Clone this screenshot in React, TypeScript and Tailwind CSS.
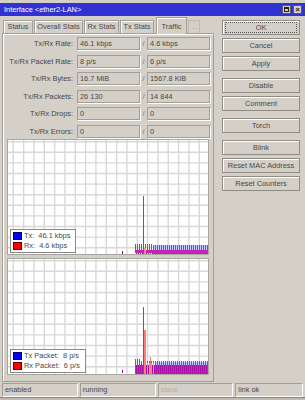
import React from "react";

const rows = [
	{ label: "Tx/Rx Rate:", a: "46.1 kbps", b: "4.6 kbps" },
	{ label: "Tx/Rx Packet Rate:", a: "8 p/s", b: "6 p/s" },
	{ label: "Tx/Rx Bytes:", a: "16.7 MiB", b: "1567.8 KiB" },
	{ label: "Tx/Rx Packets:", a: "26 130", b: "14 844" },
	{ label: "Tx/Rx Drops:", a: "0", b: "0" },
	{ label: "Tx/Rx Errors:", a: "0", b: "0" },
];

const tabs = [
	{ name: "Status", w: "w-[30px]" },
	{ name: "Overall Stats", w: "w-[49px]" },
	{ name: "Rx Stats", w: "w-[35px]" },
	{ name: "Tx Stats", w: "w-[34px]" },
];

const buttonGroups = [
	["OK", "Cancel", "Apply"],
	["Disable", "Comment"],
	["Torch"],
	["Blink", "Reset MAC Address", "Reset Counters"],
];

function range(from: number, to: number, step: number) {
	const out: number[] = [];
	for (let v = from; v <= to; v += step) out.push(v);
	return out;
}

function Grid({ h }: { h: number }) {
	return (
		<g stroke="#d8d8d8" strokeWidth="1.4">
			{range(0, 18, 1).map((k) => (
				<line key={"v" + k} x1={5.3 + k * 10.33} y1={0} x2={5.3 + k * 10.33} y2={h} />
			))}
			{range(0, 11, 1).map((k) => (
				<line key={"h" + k} x1={0} y1={1.7 + k * 10.6} x2={200} y2={1.7 + k * 10.6} />
			))}
		</g>
	);
}

function Legend({ tx, rx }: { tx: string; rx: string }) {
	return (
		<div className="absolute bottom-[1px] left-[2px] flex flex-col gap-[2px] border border-[#8a8a8a] bg-white py-[2px] pl-[2px] pr-[5px]">
			<div className="flex items-center gap-[2px]">
				<span className="h-[8px] w-[9px] border border-[#000060] bg-[#0000ff]" />
				<span className="whitespace-pre leading-[8px]">{tx}</span>
			</div>
			<div className="flex items-center gap-[2px]">
				<span className="h-[8px] w-[9px] border border-[#600000] bg-[#ff0000]" />
				<span className="whitespace-pre leading-[8px]">{rx}</span>
			</div>
		</div>
	);
}

function TrafficGraph() {
	const h = 114;
	return (
		<div className="relative ml-[4px] mt-[1px] h-[116px] w-[202px] border border-[#a9a69f] bg-white">
			<svg width="200" height={h} className="block">
				<Grid h={h} />
				<rect x="145" y="105" width="55" height="9" fill="#cacaff" />
				{range(127, 199, 2).map((x) => (
					<rect key={x} x={x} y={x > 144 ? 105 : 104} width="1" height={9} fill="#5555ff" />
				))}
				{range(128, 200, 2).map((x) => (
					<rect key={"m" + x} x={x} y={110} width="1" height={4} fill="#c020b0" />
				))}
				<rect x="135" y="56" width="1" height="58" fill="#5050ff" />
				<rect x="136" y="108" width="2" height="6" fill="#ff8a8a" />
				<rect x="114" y="111" width="1" height="3" fill="#a000a0" />
			</svg>
			<Legend tx="Tx:  46.1 kbps" rx="Rx:  4.6 kbps" />
		</div>
	);
}

function PacketGraph() {
	const h = 115;
	return (
		<div className="relative ml-[4px] mt-[3px] h-[117px] w-[202px] border border-[#a9a69f] bg-white">
			<svg width="200" height={h} className="block">
				<Grid h={h} />
				<rect x="147" y="103" width="53" height="5" fill="#cacaff" />
				{range(127, 199, 2).map((x) => (
					<rect key={x} x={x} y={x < 133 ? 100 : 102} width="1" height={h} fill="#5555ff" />
				))}
				{range(128, 200, 2).map((x) => (
					<rect key={"m" + x} x={x} y={106} width="1" height={h} fill="#a810a8" />
				))}
				{range(137, 145, 2).map((x) => (
					<rect key={"s" + x} x={x} y={104} width="1" height={h} fill="#ff8a8a" />
				))}
				<rect x="135" y="48" width="1" height={h} fill="#5050ff" />
				<rect x="136" y="71" width="2" height={h} fill="#ff7a7a" />
				<rect x="142" y="98" width="1" height={h} fill="#ff7a7a" />
				<rect x="114" y="111" width="1" height="3" fill="#a000a0" />
			</svg>
			<Legend tx="Tx Packet:  8 p/s" rx="Rx Packet:  6 p/s" />
		</div>
	);
}

export default function App() {
	return (
		<div className="flex h-[400px] w-[305px] flex-col overflow-hidden bg-[#d4d0c8] font-['Liberation_Sans',Arial,sans-serif] text-[7.4px] text-[#474747]">
			<div className="h-[3px]" />
			<div className="flex h-[13px] items-center justify-between bg-[#3232d2] pl-[4px] pr-[3px] text-white">
				<span>Interface &lt;ether2-LAN&gt;</span>
				<div className="flex gap-[2px]">
					<div className="flex h-[9px] w-[9px] items-center justify-center border border-[#5a5a5a] bg-[#d4d0c8]">
						<div className="h-[5px] w-[5px] border border-t-2 border-[#202020]" />
					</div>
					<div className="flex h-[9px] w-[9px] items-center justify-center border border-[#5a5a5a] bg-[#d4d0c8] text-[8px] font-bold leading-none text-[#202020]">
						×
					</div>
				</div>
			</div>

			<div className="mt-[1px] flex">
				<div className="ml-[2px] flex w-[212px] flex-col">
					<div className="flex h-[16px] items-end gap-[1px] pl-[1px]">
						{tabs.map((t) => (
							<div
								key={t.name}
								className={`${t.w} flex h-[13px] items-center justify-center border border-b-0 border-[#a19e97] shadow-[inset_1px_1px_0_#fff]`}
							>
								{t.name}
							</div>
						))}
						<div className="relative z-10 -mb-[1px] ml-[1px] flex h-[17px] w-[31px] items-start justify-center border border-b-0 border-[#a19e97] bg-[#d4d0c8] pt-[3px] shadow-[inset_1px_1px_0_#fff]">
							Traffic
						</div>
						<div className="flex h-[13px] w-[12px] items-center justify-center border border-b-0 border-[#bdb9b1] text-[#a8a59e]">
							...
						</div>
					</div>
					<div className="flex h-[349px] flex-col border border-[#a19e97] pt-[3px] shadow-[inset_1px_1px_0_#fff]">
						<div className="flex flex-col gap-[4.6px]">
							{rows.map((r) => (
								<div key={r.label} className="flex h-[13px] items-center">
									<div className="w-[70px] text-right">{r.label}</div>
									<div className="ml-[4px] flex h-[13px] w-[63px] items-center border border-[#a19e97] pl-[2px] shadow-[1px_1px_0_#fff]">
										{r.a}
									</div>
									<div className="w-[7px] text-center text-[#707070]">/</div>
									<div className="flex h-[13px] w-[63px] items-center border border-[#a19e97] pl-[2px] shadow-[1px_1px_0_#fff]">
										{r.b}
									</div>
								</div>
							))}
						</div>
						<TrafficGraph />
						<PacketGraph />
					</div>
				</div>

				<div className="ml-[8px] mt-[3px] flex w-[78px] flex-col gap-[7px]">
					{buttonGroups.map((g, i) => (
						<div key={i} className="flex flex-col gap-[3px]">
							{g.map((b) => (
								<div
									key={b}
									className="flex h-[15px] items-center justify-center border border-[#8f8c86] shadow-[inset_1px_1px_0_#fff]"
								>
									{b === "OK" ? (
										<div className="flex h-[11px] w-[72px] items-center justify-center border border-dotted border-[#555]">
											OK
										</div>
									) : (
										b
									)}
								</div>
							))}
						</div>
					))}
				</div>
			</div>

			<div className="mt-[1px] flex h-[14px] gap-[2px] px-[2px]">
				{["enabled", "running", "slave", "link ok"].map((s, i) => (
					<div
						key={s}
						className={`flex ${i === 3 ? "w-[68px]" : "w-[76px]"} items-center border border-[#a19e97] border-b-white border-r-white pl-[2px] ${i === 2 ? "text-[#b4b1aa]" : ""}`}
					>
						{s}
					</div>
				))}
			</div>
			<div className="mt-auto h-[3px] border-t border-[#8a8780] bg-[#bfbbb3]" />
		</div>
	);
}
